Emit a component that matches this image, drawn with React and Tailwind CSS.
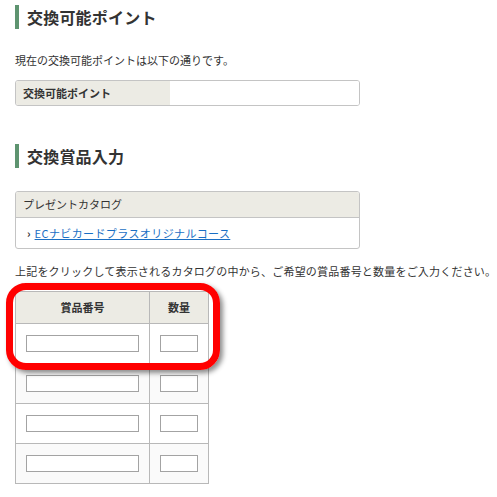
export default function App() {
  const rows = [0, 1, 2, 3];
  return (
    <div className="relative w-[497px] h-[497px] overflow-hidden bg-white px-[15px] text-[#333] font-['Noto_Sans_CJK_JP','Noto_Sans',sans-serif]">
      <h1 className="mt-[5px] h-[24px] border-l-[4px] border-[#5e9470] pl-[8px] text-[16px] font-bold leading-[24px] tracking-[0.2px]">
        交換可能ポイント
      </h1>
      <p className="mt-[23px] text-[11px] leading-[16px]">現在の交換可能ポイントは以下の通りです。</p>
      <div className="mt-[12px] flex h-[26px] w-[345px] overflow-hidden rounded-[3px] border border-[#c4c4c4]">
        <div className="w-[154px] bg-[#ecebe4] pl-[7px] text-[11px] font-bold leading-[24px]">交換可能ポイント</div>
        <div className="flex-1 bg-white"></div>
      </div>
      <h2 className="mt-[38px] h-[24px] border-l-[4px] border-[#5e9470] pl-[8px] text-[16px] font-bold leading-[24px] tracking-[0.2px]">
        交換賞品入力
      </h2>
      <div className="mt-[23px] w-[345px] overflow-hidden rounded-[3px] border border-[#c4c4c4]">
        <div className="h-[26px] border-b border-[#c4c4c4] bg-[#ecebe4] pl-[7px] text-[11px] leading-[25px]">プレゼントカタログ</div>
        <div className="flex h-[30px] items-center pl-[11px] text-[11px]">
          <span className="mr-[4px] font-bold text-[#333]">›</span>
          <a href="#" className="tracking-[0.4px] text-[#1a6fc4] underline">ECナビカードプラスオリジナルコース</a>
        </div>
      </div>
      <p className="mt-[14px] whitespace-nowrap text-[11px] leading-[16px] tracking-[0.2px]">
        上記をクリックして表示されるカタログの中から、ご希望の賞品番号と数量をご入力ください。
      </p>
      <table className="mt-[12px] border-collapse text-[11px]">
        <thead>
          <tr className="h-[32px] bg-[#ecebe4]">
            <th className="w-[134px] border border-[#b8b8b8] font-bold">賞品番号</th>
            <th className="w-[59px] border border-[#b8b8b8] font-bold">数量</th>
          </tr>
        </thead>
        <tbody>
          {rows.map((r) => (
            <tr key={r} className={r % 2 === 1 ? "h-[40px] bg-[#fafafa]" : "h-[40px] bg-white"}>
              <td className="border border-[#b8b8b8] text-center align-middle">
                <div className="mx-auto h-[17px] w-[113px] border border-[#a3a3a3] bg-white"></div>
              </td>
              <td className="border border-[#b8b8b8] text-center align-middle">
                <div className="mx-auto h-[17px] w-[38px] border border-[#a3a3a3] bg-white"></div>
              </td>
            </tr>
          ))}
        </tbody>
      </table>
      <div className="absolute left-[6px] top-[283px] h-[87px] w-[214px] rounded-[20px] border-[7px] border-[#ff0000] shadow-[3px_3px_5px_rgba(0,0,0,0.45)]"></div>
    </div>
  );
}
